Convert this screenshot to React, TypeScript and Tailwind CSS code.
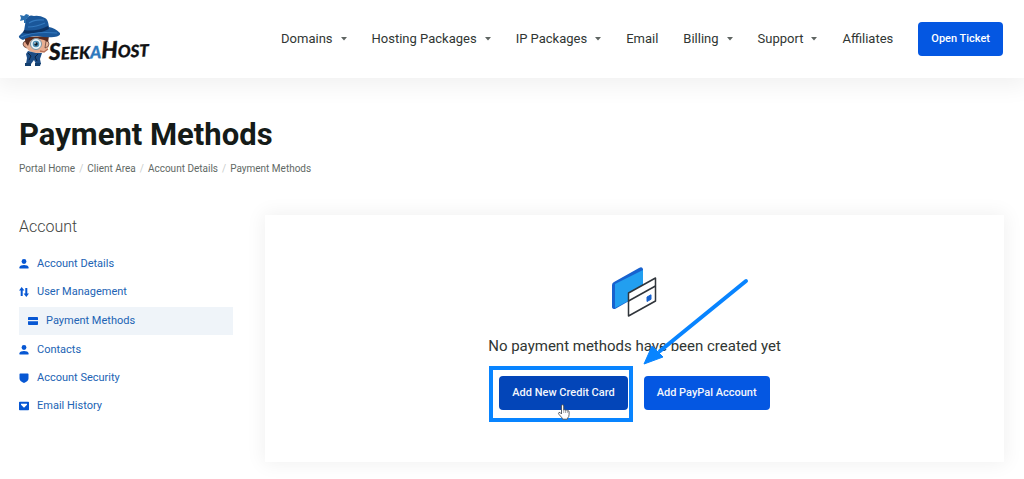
import type { ReactNode } from "react";

const navItems = [
  { label: "Domains", menu: true },
  { label: "Hosting Packages", menu: true },
  { label: "IP Packages", menu: true },
  { label: "Email", menu: false },
  { label: "Billing", menu: true },
  { label: "Support", menu: true },
  { label: "Affiliates", menu: false },
];

const crumbs = ["Portal Home", "Client Area", "Account Details"];

const userIcon = (
  <>
    <circle cx="5" cy="2.5" r="2.4" />
    <path d="M.5 9.6V8.3C.5 6.9 2.8 6 5 6s4.500.9 4.500 2.300v1.300z" />
  </>
);

const sideItems: { label: string; icon: ReactNode; active?: boolean }[] = [
  { label: "Account Details", icon: userIcon },
  {
    label: "User Management",
    icon: (
      <>
        <path d="M2.700 0 5.400 3.500H3.700V9H1.700V3.500H0z" />
        <path d="M7.300 10 4.600 6.500h1.700V1h2v5.500H10z" />
      </>
    ),
  },
  {
    label: "Payment Methods",
    active: true,
    icon: <path d="M.8 1h8.400q.8 0 .8.800V4H0V1.800Q0 1 .8 1zM0 5.300h10v2.900q0 .8-.8.800H.8Q0 9 0 8.200z" />,
  },
  { label: "Contacts", icon: userIcon },
  {
    label: "Account Security",
    icon: <path d="M1.300.5h7.400q.8 0 .8.800v4.200Q9.500 8 5 10 .5 8 .5 5.500V1.300q0-.8.8-.8z" />,
  },
  {
    label: "Email History",
    icon: (
      <path
        fillRule="evenodd"
        d="M.8.700h8.400q.8 0 .8.800v7q0 .8-.8.800H.8Q0 9.300 0 8.500v-7Q0 .7.8.7zM2 2.700v1.100l3 2.900 3-2.900V2.700z"
      />
    ),
  },
];

function Mascot() {
  return (
    <svg viewBox="0 0 43 55" className="h-[55px] w-[43px] shrink-0" aria-hidden="true">
      <path d="M9 29q-4 0-4 3t4 4z" fill="#e3a184" stroke="#3b2420" strokeWidth=".7" />
      <path d="M8 26h22l1 8q-2 7-11 7T8 35z" fill="#e7ae91" />
      <path d="M7 25l24-1-1 6-4-2-8-2-6 3-2 5q-4-4-3-9z" fill="#5b2c1f" />
      <path d="M28 29q3 0 3 3t-4 4z" fill="#e9b498" stroke="#3b2420" strokeWidth=".6" />
      <path d="M10 39l8 2 6 0-2 6 1 5h-5l-2-4-3 4H8l1-6-1-4z" fill="#1c4c84" />
      <path d="M10 41l3 3-2 4M20 42l-3 3 2 4" fill="none" stroke="#0c2240" strokeWidth="1" />
      <path d="M7 51h6v3H7zM17 51h6l-1 3h-5z" fill="#14406f" />
      <path d="M22 39l4 1 4-3" fill="none" stroke="#b66f55" strokeWidth="1.500" />
      <circle cx="18" cy="32" r="5.500" fill="#eef6fa" stroke="#7994a3" strokeWidth="1" />
      <circle cx="18" cy="32" r="3.300" fill="#4c8fb6" />
      <circle cx="18" cy="32" r="1.700" fill="#101c28" />
      <circle cx="17" cy="31" r=".8" fill="#fff" />
      <path
        d="M8 7q3-5 8-3 5-1 11 2 3 1 4 9 6 1 11 6 1 3-6 4-8 1-16-1-9 0-15 4-5-2-4-4 3-3 5-5z"
        fill="#1a579a"
      />
      <path d="M6 18q12 2 24-4l1 3q-12 6-26 4z" fill="#0d3263" />
      <path d="M11 11q6-4 15-3M10 15q8 0 17-4M3 25q13-6 36-4" fill="none" stroke="#3379bf" strokeWidth="1.200" />
      <path d="M2 3l4 1 2-2 3 1-1 3-2 1v4H6V8L2 9l1-3z" fill="#2a6fae" />
    </svg>
  );
}

function Logo() {
  return (
    <a href="#" aria-label="SeekaHost" className="flex shrink-0 items-center">
      <Mascot />
      <svg viewBox="0 0 106 34" className="-ml-3 mt-5 h-[34px] w-[106px] overflow-visible">
        <text
          x="0"
          y="28"
          transform="rotate(-2 0 28)"
          fontFamily="Lato, 'Liberation Sans', sans-serif"
          fontWeight="900"
          fontStyle="italic"
          fontSize="17"
          fill="#111214"
          stroke="#111214"
          strokeWidth=".3"
        >
          <tspan fontSize="23">S</tspan>EEK<tspan fill="#2d78bd" stroke="#2d78bd">A</tspan><tspan fontSize="23">H</tspan>OST
        </text>
      </svg>
    </a>
  );
}

function CardsDrawing() {
  return (
    <svg viewBox="0 0 46 52" className="h-[52px] w-[46px]" aria-hidden="true">
      <path d="M0 18 Q0 16 2 15 L27 1 Q30-1 31 2 V26 L3 42 Q0 42 0 40z" fill="#1762cf" />
      <path d="M3 17 31 3v23L3 41z" fill="#229ff0" />
      <path d="M16.500 26 43.500 11v23L16.500 49z" fill="#fff" stroke="#30353b" strokeWidth="1.500" strokeLinejoin="round" />
      <path d="M16.500 34 43.500 19" stroke="#30353b" strokeWidth="1.500" />
      <path d="m35 30 4-2.200v4.500L35 34.500z" fill="#1762cf" stroke="#1762cf" />
    </svg>
  );
}

export default function App() {
  return (
    <div className="min-h-screen bg-white font-['Roboto','Liberation_Sans',sans-serif] text-[#303633]">
      <header className="flex h-[78px] items-center justify-between bg-white pl-[18px] pr-[21px] shadow-[0_4px_22px_4px_rgba(0,0,0,0.06)]">
        <Logo />
        <nav aria-label="Main" className="flex items-center gap-[25px] whitespace-nowrap text-[13px]">
          {navItems.map((item) => (
            <a key={item.label} href="#" className="flex items-center gap-2">
              {item.label}
              {item.menu && (
                <svg viewBox="0 0 6 4" className="h-1 w-1.5" aria-hidden="true">
                  <path d="M0 0h6L3 3.500z" fill="#5f6562" />
                </svg>
              )}
            </a>
          ))}
          <a href="#" className="flex h-[34px] items-center rounded bg-[#0457e2] px-[13px] text-[11px] font-medium text-white">
            Open Ticket
          </a>
        </nav>
      </header>

      <div className="pl-[19px] pr-5 pt-[37px]">
        <h1 className="text-[31px] font-bold leading-10 text-[#151b18]">Payment Methods</h1>
        <nav aria-label="Breadcrumb" className="mt-1.5">
          <ol className="flex text-[10px] leading-4 text-[#626965]">
            {crumbs.map((crumb) => (
              <li key={crumb} className="flex">
                <a href="#">{crumb}</a>
                <span className="px-1 text-[#c9cdcb]">/</span>
              </li>
            ))}
            <li aria-current="page">Payment Methods</li>
          </ol>
        </nav>

        <div className="mt-[38px] flex items-start gap-8">
          <aside className="w-[214px] shrink-0">
            <h2 className="text-base font-light leading-6 text-[#3f4441]">Account</h2>
            <ul className="mt-[11px] text-[11px] text-[#2163b4]">
              {sideItems.map((item) => (
                <li key={item.label} className={item.active ? "my-px bg-[#eff4f9] pl-[9px]" : ""}>
                  <a href="#" className="flex h-7 items-center gap-2">
                    <svg viewBox="0 0 10 10" className="size-2.5 fill-[#0757d3]" aria-hidden="true">
                      {item.icon}
                    </svg>
                    {item.label}
                  </a>
                </li>
              ))}
            </ul>
          </aside>

          <main className="flex min-w-0 flex-1 flex-col items-center bg-white pb-[52px] pt-[52px] shadow-[0_0_18px_2px_rgba(0,0,0,0.06)]">
            <CardsDrawing />
            <p className="mt-[15px] text-[15px] leading-6">No payment methods have been created yet</p>
            <div className="relative mt-[18px] flex gap-4">
              <button className="h-[34px] rounded bg-[#0345b8] px-[13px] text-[11px] font-medium text-[#f3f6fc]">
                Add New Credit Card
              </button>
              <button className="h-[34px] rounded bg-[#0457e2] px-[13px] text-[11px] font-medium text-[#f3f6fc]">
                Add PayPal Account
              </button>
              <div className="pointer-events-none absolute -left-2.5 -top-2.5 h-[56px] w-[144px] border-4 border-[#0884ff]" />
              <svg viewBox="0 0 106 88" className="pointer-events-none absolute -top-[98px] left-[144px] h-[88px] w-[106px]" aria-hidden="true">
                <path d="M103 3 17 73" stroke="#0884ff" strokeWidth="4" strokeLinecap="round" />
                <path d="M1 86 9 68 20 79z" fill="#0884ff" stroke="#0884ff" strokeLinejoin="round" />
              </svg>
              <svg viewBox="0 0 14 16" className="pointer-events-none absolute left-[58px] top-7 h-4 w-3.5" aria-hidden="true">
                <path
                  d="M4.500 9V2q0-1.300 1.100-1.300T6.700 2v4q1-.7 1.800.3 1.100-.6 1.800.4 1.800-.4 1.800 1.300v2.500q0 2.500-1.600 3.700v1H5.300v-1L2 10.400Q1 9 2 8.400q1-.5 2.500 1.600z"
                  fill="#fff"
                  stroke="#4b5057"
                  strokeWidth=".9"
                />
                <path d="M6.700 6v3M8.500 6.500V9M10.300 7v2" stroke="#777" strokeWidth=".6" />
              </svg>
            </div>
          </main>
        </div>
      </div>
    </div>
  );
}
